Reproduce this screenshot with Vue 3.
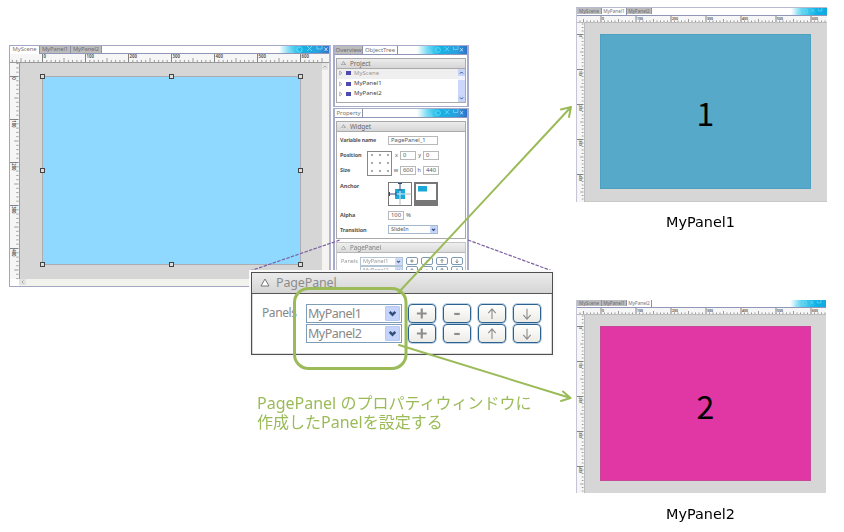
<script setup>
const tabs = ['MyScene', 'MyPanel1', 'MyPanel2']

function ticks(start, scale, length) {
  const out = []
  for (let n = -30; n <= 700; n++) {
    const pos = start + n * 10 * scale
    if (pos < 0.5 || pos > length - 0.5) continue
    const major = n % 10 === 0
    out.push({ pos, major, mid: n % 5 === 0, label: n * 10 })
  }
  return out
}

const editors = [
  { id: 'scene', active: 0, sx: 32.5, scale: 0.43, text: '', handles: true },
  { id: 'one', active: 1, sx: 24, scale: 0.35, text: '1' },
  { id: 'two', active: 2, sx: 24, scale: 0.35, text: '2' },
].map((e) => ({
  ...e,
  across: ticks(e.sx, e.scale, e.id === 'scene' ? 314 : 251),
  down: ticks(e.id === 'scene' ? 13.5 : 11.5, e.scale, e.id === 'scene' ? 224 : 180),
}))

const tree = ['MyScene', 'MyPanel1', 'MyPanel2']
const panels = ['MyPanel1', 'MyPanel2']
const actions = ['plus', 'minus', 'up', 'down']
const glyphs = {
  plus: 'M8.500 9h10.500M13.750 3.700v10.600',
  minus: 'M11 9.500h6',
  up: 'M14 15V4M10 8.500L14 4l4 4.500',
  down: 'M14 4v11M10 10.500L14 15l4-4.500',
}
</script>

<template>
  <main class="stage">
    <section v-for="e in editors" :key="e.id" class="editor" :class="e.id">
      <div class="titlebar">
        <span v-for="(t, i) in tabs" :key="t" class="tab" :class="{ active: i === e.active }">{{ t }}</span>
        <svg class="deco" viewBox="0 0 50 9" preserveAspectRatio="xMaxYMid slice">
          <path d="M8 8l3-4 3 4zM28 1l5 5M33 1l-5 5M38 1v3h5V0" />
          <circle cx="20.500" cy="4.500" r="2.700" />
          <path v-if="e.handles" class="close" d="M45.500 2.500l3 3.500M48.500 2.500l-3 3.500" />
        </svg>
      </div>
      <svg class="ruler-h">
        <g v-for="t in e.across" :key="t.pos">
          <line :x1="t.pos" :x2="t.pos" :y1="t.major ? 0 : t.mid ? '50%' : '74%'" y2="100%" :class="{ major: t.major }" />
          <text v-if="t.major && t.label >= 0" :x="t.pos + 1" y="4.300">{{ t.label }}</text>
        </g>
      </svg>
      <div class="work">
        <svg class="ruler-v">
          <g v-for="t in e.down" :key="t.pos">
            <line :y1="t.pos" :y2="t.pos" :x1="t.major ? 0 : t.mid ? '50%' : '74%'" x2="100%" :class="{ major: t.major }" />
            <text v-if="t.major && t.label >= 0" :transform="`translate(2.200 ${t.pos + 0.7}) rotate(90)`">{{ t.label }}</text>
          </g>
        </svg>
        <div class="canvas">
          <div class="sheet">
            <span>{{ e.text }}</span>
            <template v-if="e.handles">
              <i v-for="n in 8" :key="n" class="handle" :class="'h' + n"></i>
            </template>
          </div>
        </div>
        <div v-if="e.handles" class="vscroll">
          <svg viewBox="0 0 6 7"><path d="M1.500 4.500L3 3l1.500 1.500" /></svg>
        </div>
      </div>
      <div v-if="e.handles" class="hscroll">
        <svg viewBox="0 0 7 6"><path d="M4.500 1.500L3 3l1.500 1.500" /></svg>
      </div>
    </section>

    <section class="dock tree-dock">
      <div class="titlebar">
        <span class="tab">Overview</span><span class="tab active">ObjectTree</span>
        <svg class="deco" viewBox="0 0 50 9">
          <path d="M8 8l3-4 3 4zM28 1l5 5M33 1l-5 5M38 1v3h5V0" />
          <circle cx="20.500" cy="4.500" r="2.700" />
          <path class="close" d="M45.500 2.500l3 3.500M48.500 2.500l-3 3.500" />
        </svg>
      </div>
      <div class="group tree-group">
        <div class="ghead"><b class="tri"></b>Project</div>
        <div class="tree">
          <div class="items">
            <div v-for="(t, i) in tree" :key="t" class="item" :class="{ chosen: i === 0 }">
              <svg viewBox="0 0 4 6"><path d="M.7 1L3 3 .7 5z" /></svg><i></i>{{ t }}
            </div>
          </div>
          <div class="bar">
            <svg viewBox="0 0 7 7"><path d="M2 4.500L3.500 3 5 4.500" /></svg>
            <i></i>
            <svg viewBox="0 0 7 7"><path d="M2 2.500L3.500 4 5 2.500" /></svg>
          </div>
        </div>
      </div>
    </section>

    <section class="dock prop-dock">
      <div class="titlebar">
        <span class="tab active">Property</span>
        <svg class="deco" viewBox="0 0 50 9">
          <path d="M8 8l3-4 3 4zM28 1l5 5M33 1l-5 5M38 1v3h5V0" />
          <circle cx="20.500" cy="4.500" r="2.700" />
          <path class="close" d="M45.500 2.500l3 3.500M48.500 2.500l-3 3.500" />
        </svg>
      </div>
      <div class="group widget">
        <div class="ghead"><b class="tri"></b>Widget</div>
        <div class="row name"><label>Variable name</label><span class="field wide">PagePanel_1</span></div>
        <div class="geometry">
          <div class="labels"><label>Position</label><label>Size</label></div>
          <div class="dots"><i v-for="n in 9" :key="n"></i></div>
          <div class="pairs">
            <em>x</em><span class="field">0</span><em>y</em><span class="field">0</span>
            <em>w</em><span class="field">600</span><em>h</em><span class="field">440</span>
          </div>
        </div>
        <div class="row anchor">
          <label>Anchor</label>
          <svg class="pin" viewBox="0 0 24 24">
            <rect x=".5" y=".5" width="23" height="23" fill="#fff" stroke="#777" />
            <path d="M7 7h10v10H7z" fill="#19a8d8" />
            <path d="M12 7v10M7 12h10" stroke="#d5eef8" />
            <path d="M12 1v7M1 12h7" stroke="#264a83" />
            <path d="M12 17v7M17 12h7" stroke="#999" stroke-width=".7" />
            <path d="M10 1.500h4M1.500 10v4M10.300 8h3.400M8 10.300v3.400" stroke="#264a83" />
          </svg>
          <svg class="pin" viewBox="0 0 24 24">
            <rect width="24" height="24" fill="#777" />
            <rect x="2" y="2" width="20" height="16" fill="#fff" />
            <rect x="4" y="4" width="9" height="5.500" fill="#19a8d8" />
          </svg>
        </div>
        <div class="row alpha"><label>Alpha</label><span class="field">100</span><em>%</em></div>
        <div class="row transition">
          <label>Transition</label>
          <span class="combo mini"><span>SlideIn</span><svg viewBox="0 0 15 16"><path d="M4 6.500l3.500 3.500L11 6.500" /></svg></span>
        </div>
      </div>
      <div class="group page">
        <div class="ghead"><b class="tri"></b>PagePanel</div>
        <div v-for="(p, i) in panels" :key="p" class="prow">
          <label>{{ i ? '' : 'Panels' }}</label>
          <span class="combo mini"><span>{{ p }}</span><svg viewBox="0 0 15 16"><path d="M4 6.500l3.500 3.500L11 6.500" /></svg></span>
          <button v-for="a in actions" :key="a"><svg viewBox="0 0 28 18"><path :d="glyphs[a]" /></svg></button>
        </div>
      </div>
    </section>

    <svg class="leads" viewBox="0 0 844 532">
      <path d="M250 271L340 240M468 240L551 270.500" />
    </svg>

    <section class="inset">
      <div class="frame">
        <header><svg viewBox="0 0 10 9"><path d="M1 8L5 1l4 7z" /></svg>PagePanel</header>
        <div class="body">
          <label>Panels</label>
          <div class="lines">
            <div v-for="p in panels" :key="p" class="line">
              <span class="combo"><span>{{ p }}</span><svg viewBox="0 0 15 16"><path d="M4 6l3.500 3.500L11 6" /></svg></span>
              <button v-for="a in actions" :key="a" :class="a"><svg viewBox="0 0 28 18"><path :d="glyphs[a]" /></svg></button>
            </div>
          </div>
        </div>
      </div>
    </section>

    <svg class="arrows" viewBox="0 0 844 532">
      <rect x="294.500" y="288.500" width="111.500" height="80" rx="14" class="thick" />
      <path d="M398.500 292.500L571 107M561 109.500L571 107L569 117M399 345L570.500 398M563 391.500L570.500 398L561 401" />
    </svg>
    <p class="note"><span>PagePanel のプロパティウィンドウに</span><span>作成したPanelを設定する</span></p>
    <p class="caption c1">MyPanel1</p>
    <p class="caption c2">MyPanel2</p>
  </main>
</template>

<style>
body { background: #fff; overflow: hidden; }
</style>

<style scoped>
*, *::after { box-sizing: border-box; }
.stage { position: relative; width: 844px; height: 532px; overflow: hidden; background: #fff; font-family: "Noto Sans", "Open Sans", "Noto Sans CJK JP", sans-serif; font-size: 6px; color: #555; }
svg { display: block; fill: none; flex: none; }
label, em { font-style: normal; }

.editor { position: absolute; display: flex; flex-direction: column; overflow: hidden; }
.scene { left: 9px; top: 45px; width: 322px; height: 242px; border: 1px solid #a4a6c4; border-right: 2px solid #b4b6d4; }
.one, .two { left: 576px; width: 251px; font-size: 5px; }
.one { top: 7px; height: 195px; border-top: 1px solid #b8bad0; border-left: 1px solid #c4c5d6; }
.two { top: 300px; height: 193px; width: 250px; border-left: 1px solid #c4c5d6; }

.titlebar { flex: none; height: 8px; display: flex; background: #fff; border-bottom: 1px solid #8f96b8; }
.tab { height: 7px; line-height: 7px; background: #bcbcbc; border-right: 1px solid #8d8fa5; color: #6c6c74; font-size: 5.800px; text-align: center; white-space: nowrap; letter-spacing: -.05px; }
.tab.active { background: #fff; color: #777; height: 8px; }
.scene .tab { width: 31px; }
.scene .tab:first-child { width: 30px; }
.one .tab, .two .tab { width: 25px; font-size: 4.800px; height: 6px; line-height: 6px; }
.one .titlebar, .two .titlebar { height: 7.500px; }
.one .tab.active, .two .tab.active { height: 7px; }
.deco { width: 50px; height: 100%; margin-left: auto; background: linear-gradient(90deg, #fff0, #62d5f2 24%, #12b4e5 45%, #2ba0df 78%, #2f72c9); stroke: #83dcf4; stroke-width: .8; }
.deco .close { stroke: #e8f4ff; }
.one .deco, .two .deco { width: 36px; background: linear-gradient(90deg, #fff0, #62d5f2 30%, #10b4e6 70%, #12a8e0); }

.ruler-h { width: 100%; height: 9px; background: #f6f6f6; border-bottom: 1px solid #999; }
.one .ruler-h, .two .ruler-h { height: 7px; border-color: #bbb; }
.ruler-h line, .ruler-v line { stroke: #858585; stroke-width: .8; }
.ruler-h .major, .ruler-v .major { stroke: #666; }
.ruler-h text, .ruler-v text { font-size: 4.300px; font-weight: 600; fill: #444; }
.one text, .two text { font-size: 3.400px; }
.work { flex: 1; min-height: 0; display: flex; }
.ruler-v { width: 9.500px; height: 100%; background: #f6f6f6; border-right: 1px solid #999; }
.one .ruler-v, .two .ruler-v { width: 7.500px; border-color: #bbb; }
.canvas { flex: 1; background: #d6d6d6; padding: 13px 0 0 22.500px; }
.one .canvas, .two .canvas { padding: 11px 0 0 15.500px; }
.two .canvas { padding-top: 11.500px; }
.one .canvas { border-bottom: 1px solid #c8c8c8; }
.sheet { position: relative; width: 259px; height: 189px; background: #8fd8ff; border: 1px solid #a9adb2; display: flex; align-items: center; justify-content: center; color: #000; font: 32px/40px "Noto Sans CJK JP", sans-serif; }
.one .sheet, .two .sheet { width: 211px; height: 155px; }
.one .sheet { background: #57a9ca; border-color: #4f9fc0; }
.two .sheet { background: #e037a5; border-color: #c84799; }
.one .sheet span, .two .sheet span { padding-top: 2px; }
.handle { position: absolute; width: 5px; height: 5px; border: 1px solid #444; background: #ddd; }
.h1 { left: -3px; top: -3px; } .h2 { left: 126px; top: -3px; } .h3 { left: 255px; top: -3px; }
.h4 { left: -3px; top: 91px; } .h5 { left: 255px; top: 91px; }
.h6 { left: -3px; top: 185px; } .h7 { left: 126px; top: 185px; } .h8 { left: 255px; top: 185px; }
.vscroll { width: 7px; background: #f5f4f0; }
.vscroll svg { height: 7px; width: 6px; background: #e5e5e5; stroke: #aaa; }
.hscroll { flex: none; height: 7px; margin-left: 9px; background: #f3f3ee; }
.hscroll svg { width: 7px; height: 6px; background: #e2e2e0; stroke: #aaa; }

.dock { position: absolute; left: 333px; width: 136px; border: 1px solid #a9abca; border-width: 1px 2px; background: #fff; overflow: hidden; }
.tree-dock { top: 45px; height: 62px; }
.prop-dock { top: 108px; height: 162px; border-bottom: 0; }
.dock .tab { width: 28px; height: 8px; line-height: 8px; font-size: 6px; }
.dock .tab + .tab { width: 35px; }
.dock .prop-dock .tab { width: 27px; }
.dock .titlebar { height: 9px; }
.group { margin: 2.500px 1px 0 1px; border: 1px solid #a9a9a9; }
.tree-group { height: 45px; }
.ghead { height: 10px; padding-left: 4px; display: flex; align-items: center; gap: 4px; background: linear-gradient(#ececec, #d6d6d6); border-bottom: 1px solid #aaa; line-height: 9px; font-size: 6.300px; color: #666; }
.tri { width: 5px; height: 4px; background: #888; clip-path: polygon(50% 0, 100% 100%, 0 100%, 15% 85%, 78% 85%, 50% 25%, 15% 90%, 0 100%); }
.tree { display: flex; height: 33px; }
.items { flex: 1; }
.item { height: 10.400px; display: flex; align-items: center; padding-left: 2px; line-height: 9px; padding-bottom: 1px; font-size: 6px; color: #444; }
.item svg { width: 4px; height: 6px; stroke: #888; stroke-width: .6; }
.item i { width: 5px; height: 4px; margin: 0 3px 0 3px; background: #4d4ab0; }
.chosen { background: #efefef; color: #999; }
.bar { width: 7px; display: flex; flex-direction: column; background: #eef2ff; }
.bar svg { width: 7px; height: 7px; background: #c5d4f8; stroke: #35508b; }
.bar i { flex: 1; margin-top: 4px; background: #cbd8fc; }

.widget { height: 118px; }
.prop-dock .widget .ghead { height: 10.500px; }
.row { display: flex; align-items: center; padding-left: 3px; height: 15px; }
.row.name { height: 15.500px; padding-top: .5px; }
.row label, .labels label { width: 48px; font-weight: 700; font-size: 5.500px; letter-spacing: -.1px; }
.row.name label { font-size: 5.300px; letter-spacing: -.15px; white-space: nowrap; }
.field { width: 16px; height: 9px; line-height: 7px; padding-left: 2px; border: 1px solid #b8b8b8; font-size: 5.800px; background: #fff; }
.wide { width: 50px; }
.geometry { display: flex; height: 30px; padding-left: 3px; }
.labels { width: 27px; display: flex; flex-direction: column; }
.labels label { width: 27px; height: 15px; line-height: 15px; }
.dots { width: 25px; height: 25px; margin-top: 3px; border: 1px solid #888; display: grid; grid-template-columns: repeat(3, 8px); align-items: center; justify-items: center; }
.dots i { width: 2px; height: 2px; background: #aaa; }
.pairs { display: grid; grid-template-columns: 7px 16px 7px 16px; grid-auto-rows: 15px; align-items: center; text-align: right; font-size: 5.500px; padding-left: 1px; }
.pairs em { padding-right: 2px; }
.pairs .field { text-align: left; }
.row.anchor { height: 30px; align-items: flex-start; padding-top: 4px; }
.pin { width: 24px; height: 24px; margin-right: 2px; }
.alpha em { padding-left: 2px; }
.row.transition { height: 14.500px; }

.combo { display: flex; justify-content: space-between; border: 1px solid #7f9db9; background: #fff; }
.combo svg { background: #c4d4fb; border: 1px solid #b8c9f0; stroke: #334d78; stroke-width: 3; border-radius: 1px; }
.mini { width: 50px; height: 9px; border-color: #a5b9cc; padding-left: 2px; line-height: 7px; font-size: 5.500px; }
.mini svg { width: 7px; height: 7px; border: 0; }
.page { margin-top: 3.500px; height: 60px; border-color: #bbb; opacity: .85; }
.page .ghead { margin-bottom: 3.500px; }
.prow { display: flex; height: 9px; padding-left: 4px; align-items: center; font-size: 5.500px; color: #888; }
.prow label { width: 19px; }
.prow .mini { width: 43px; margin-right: 1px; }
.prow button { width: 12px; height: 8px; margin: 0 1.500px; padding: 0; border: 1px solid #6688a8; border-radius: 2px; background: #fff; flex: none; }
.prow button svg { width: 100%; height: 100%; stroke: #777; stroke-width: 3; }

.leads, .arrows { position: absolute; inset: 0; width: 844px; height: 532px; pointer-events: none; }
.leads { stroke: #7d60a0; stroke-width: 1.200; stroke-dasharray: 3.500 1.300; }
.arrows { stroke: #9bbb59; stroke-width: 2; stroke-linecap: round; stroke-linejoin: round; }
.thick { stroke-width: 3; }

.inset { position: absolute; left: 249px; top: 270px; width: 306px; height: 87px; padding: 2px; background: #fafafa; }
.frame { width: 302px; height: 83px; border: 1px solid #505050; background: #fff; box-shadow: inset 0 0 0 .3px #777; color: #888; }
.frame header { height: 21px; padding-left: 8px; display: flex; align-items: center; gap: 6px; border-bottom: 1px solid #555; background: linear-gradient(#ebebeb, #d5d5d5); font-size: 12.500px; letter-spacing: -.15px; line-height: 18px; padding-bottom: 1px; color: #8c8c8c; }
.frame header svg { width: 10px; height: 9px; stroke: #777; fill: #fff; }
.body { display: flex; padding: 10px 0 0 10px; }
.body label { width: 44px; height: 19px; line-height: 17px; font-size: 12px; letter-spacing: -.4px; }
.lines { display: flex; flex-direction: column; gap: 1px; }
.line { display: flex; height: 19px; }
.line .combo { width: 96px; height: 19px; padding: 1px; margin-right: 6px; font-size: 12.500px; line-height: 16px; letter-spacing: -.5px; }
.line .combo svg { width: 15px; height: 15px; }
.line button { width: 28px; height: 19px; margin-right: 7px; padding: 0; border: 1px solid #2d618f; border-radius: 4px; background: linear-gradient(#fff, #ecebe5); box-shadow: 0 0 0 .7px #a6c3dc; }
.line button svg { width: 26px; height: 17px; stroke: #8d8d8d; stroke-width: 1.200; }
.line button.plus svg, .line button.minus svg { stroke-width: 2.300; }

.note { position: absolute; left: 257px; top: 394px; margin: 0; display: flex; flex-direction: column; font: 16px/19px "Noto Sans", "Noto Sans CJK JP", sans-serif; color: #9bbb59; white-space: nowrap; }
.note span { height: 19px; }
.caption { position: absolute; left: 666px; margin: 0; font: 14.400px/18px "DejaVu Sans", sans-serif; color: #000; white-space: nowrap; }
.c1 { top: 213px; }
.c2 { top: 505px; }
</style>
